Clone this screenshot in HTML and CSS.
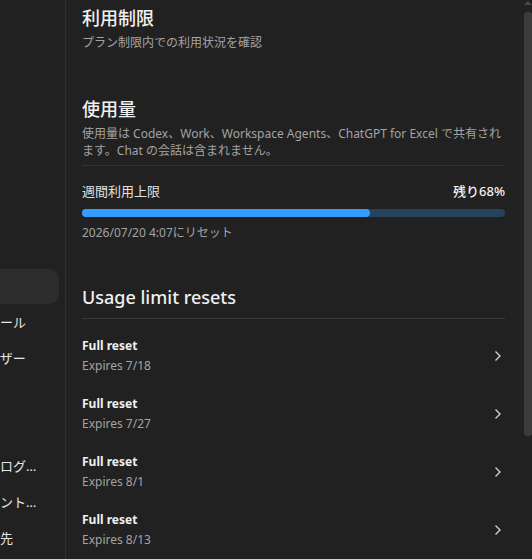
FILE: index.html
```html
<!DOCTYPE html>
<html lang="ja">
<head>
    <meta charset="UTF-8">
    <meta name="viewport" content="width=device-width, initial-scale=1.0">
    <title>利用制限</title>
    <link rel="stylesheet" href="styles.css">
</head>
<body>
    <!-- Barra laterale delle impostazioni (scorsa a sinistra) -->
    <aside class="sidebar">
        <ul class="nav">
            <li class="nav-item">一般</li>
            <li class="nav-item">通知</li>
            <li class="nav-item">外観</li>
            <li class="nav-item">アプリ</li>
            <li class="nav-item">データ</li>
            <li class="nav-item">請求</li>
            <li class="nav-item">保護</li>
            <li class="nav-item active">使用状況</li>
            <li class="nav-item">スキルとツール</li>
            <li class="nav-item">全てのユーザー</li>
            <li class="nav-item">メモリ</li>
            <li class="nav-item">連携</li>
            <li class="nav-item">使用状況のログをエクスポート</li>
            <li class="nav-item">共有アカウントの管理</li>
            <li class="nav-item">通知の送信先</li>
        </ul>
    </aside>

    <main class="main">
        <div class="content">
            <section class="block">
                <h1 class="title">利用制限</h1>
                <p class="subtitle">プラン制限内での利用状況を確認</p>
            </section>

            <section class="block usage">
                <h2 class="title">使用量</h2>
                <p class="desc">使用量は Codex、Work、Workspace Agents、ChatGPT for Excel で共有されます。Chat の会話は含まれません。</p>

                <div class="limit">
                    <div class="limit-head">
                        <span>週間利用上限</span>
                        <span class="remaining">残り68%</span>
                    </div>
                    <div class="bar"><div class="bar-fill" style="width: 68%"></div></div>
                    <p class="reset-at">2026/07/20 4:07にリセット</p>
                </div>
            </section>

            <section class="block resets">
                <h2 class="title">Usage limit resets</h2>
                <ul class="reset-list">
                    <li class="reset-item">
                        <div>
                            <div class="reset-name">Full reset</div>
                            <div class="reset-exp">Expires 7/18</div>
                        </div>
                        <svg class="chev" width="8" height="12" viewBox="0 0 8 12"><path d="M1.5 1.5 6 6l-4.5 4.5" fill="none" stroke="#cfcfcf" stroke-width="1.4"/></svg>
                    </li>
                    <li class="reset-item">
                        <div>
                            <div class="reset-name">Full reset</div>
                            <div class="reset-exp">Expires 7/27</div>
                        </div>
                        <svg class="chev" width="8" height="12" viewBox="0 0 8 12"><path d="M1.5 1.5 6 6l-4.5 4.5" fill="none" stroke="#cfcfcf" stroke-width="1.4"/></svg>
                    </li>
                    <li class="reset-item">
                        <div>
                            <div class="reset-name">Full reset</div>
                            <div class="reset-exp">Expires 8/1</div>
                        </div>
                        <svg class="chev" width="8" height="12" viewBox="0 0 8 12"><path d="M1.5 1.5 6 6l-4.5 4.5" fill="none" stroke="#cfcfcf" stroke-width="1.4"/></svg>
                    </li>
                    <li class="reset-item">
                        <div>
                            <div class="reset-name">Full reset</div>
                            <div class="reset-exp">Expires 8/13</div>
                        </div>
                        <svg class="chev" width="8" height="12" viewBox="0 0 8 12"><path d="M1.5 1.5 6 6l-4.5 4.5" fill="none" stroke="#cfcfcf" stroke-width="1.4"/></svg>
                    </li>
                </ul>
            </section>
        </div>

        <!-- Barra di scorrimento -->
        <div class="scrollbar">
            <div class="scroll-arrow"></div>
            <div class="scroll-thumb"></div>
        </div>
    </main>
</body>
</html>
```

FILE: styles.css
```css
body {
    display: flex;
    height: 100vh;
    margin: 0;
    overflow: hidden;
    background: #212121;
    color: #ececec;
    font-family: 'Noto Sans', 'Noto Sans CJK JP', sans-serif;
}

ul {
    list-style: none;
    margin: 0;
    padding: 0;
}

p {
    margin: 0;
}

.sidebar {
    width: 65px;
    flex-shrink: 0;
    border-right: 1px solid #303030;
    overflow: hidden;
}

.nav {
    margin-left: -77px;
    padding-top: 17px;
    width: 124px;
}

.nav-item {
    height: 35px;
    margin-bottom: 1px;
    padding-left: 12px;
    border-radius: 10px;
    font-size: 13px;
    line-height: 35px;
    color: #e6e6e6;
    white-space: nowrap;
    overflow: hidden;
    text-overflow: ellipsis;
}

.nav-item.active {
    width: 124px;
    background: #2d2d2d;
}

.main {
    flex: 1;
    display: flex;
}

.content {
    flex: 1;
    padding: 5px 19px 0 16px;
}

.title {
    margin: 0;
    font-size: 18px;
    font-weight: 500;
    line-height: 26px;
    color: #f0f0f0;
}

.subtitle,
.desc,
.reset-at {
    font-size: 12px;
    line-height: 17px;
    color: #a3a3a3;
}

.subtitle {
    margin-top: 3px;
}

.usage {
    margin-top: 45px;
}

.desc {
    margin-top: 3px;
    padding-right: 3px;
    padding-bottom: 6px;
    border-bottom: 1px solid #333;
}

.limit {
    padding-top: 15px;
}

.limit-head {
    display: flex;
    justify-content: space-between;
    font-size: 13px;
    line-height: 20px;
    color: #e0e0e0;
}

.remaining {
    font-weight: 500;
    color: #f2f2f2;
}

.bar {
    height: 8px;
    margin-top: 8px;
    border-radius: 4px;
    background: #26425f;
}

.bar-fill {
    height: 100%;
    border-radius: 4px;
    background: #339cff;
}

.reset-at {
    margin-top: 7px;
}

.resets {
    margin-top: 43px;
}

.resets .title {
    padding-bottom: 8px;
    border-bottom: 1px solid #3a3a3a;
}

.reset-list {
    padding-top: 8px;
}

.reset-item {
    display: flex;
    align-items: center;
    justify-content: space-between;
    height: 58px;
    padding-right: 3px;
}

.reset-name {
    font-size: 12px;
    font-weight: 700;
    line-height: 20px;
    color: #f0f0f0;
}

.reset-exp {
    font-size: 12px;
    line-height: 20px;
    color: #a3a3a3;
}

.scrollbar {
    width: 8px;
    flex-shrink: 0;
    display: flex;
    flex-direction: column;
    align-items: center;
}

.scroll-arrow {
    width: 0;
    height: 0;
    margin-top: 1px;
    border-left: 4px solid transparent;
    border-right: 4px solid transparent;
    border-bottom: 4px solid #4a4a4a;
}

.scroll-thumb {
    width: 8px;
    height: 424px;
    margin-top: 7px;
    border-radius: 3px;
    background: #3b3b3b;
}
```
